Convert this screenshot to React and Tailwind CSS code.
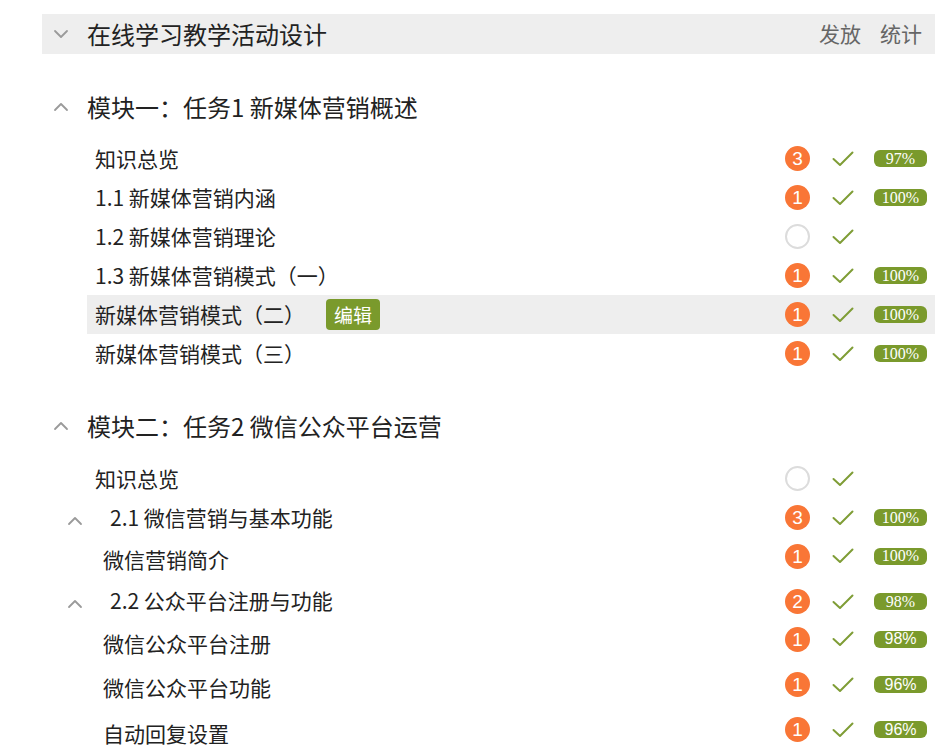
import React from "react";

const FONT = { fontFamily: '"Noto Sans CJK SC", "Noto Sans", sans-serif' };

function ChevronDown() {
  return (
    <svg width="16" height="10" viewBox="0 0 16 10" fill="none">
      <path d="M2 2 L8 8 L14 2" stroke="#9a9a9a" strokeWidth="1.8" strokeLinecap="round" strokeLinejoin="round" />
    </svg>
  );
}
function ChevronUp() {
  return (
    <svg width="16" height="10" viewBox="0 0 16 10" fill="none">
      <path d="M2 8 L8 2 L14 8" stroke="#9a9a9a" strokeWidth="1.8" strokeLinecap="round" strokeLinejoin="round" />
    </svg>
  );
}
function Check() {
  return (
    <svg width="22" height="16" viewBox="0 0 22 16" fill="none">
      <path d="M1.5 8 L8 14 L20.5 1.5" stroke="#7f9d36" strokeWidth="2" strokeLinecap="round" strokeLinejoin="round" />
    </svg>
  );
}

function Status({ count, pct, serif = true, offset = "" }) {
  return (
    <div className={`flex items-center shrink-0 ${offset}`}>
      {count ? (
        <div
          className="w-[25px] h-[25px] rounded-full bg-[#f97636] text-white flex items-center justify-center text-[19px] leading-none"
          style={{ fontFamily: '"Liberation Sans", Arial, sans-serif' }}
        >
          {count}
        </div>
      ) : (
        <div className="w-[25px] h-[25px] rounded-full border-2 border-[#dcdcdc] box-border" />
      )}
      <div className="ml-[22px] w-[22px] flex items-center justify-center">
        <Check />
      </div>
      <div className="ml-[20px] w-[53px] flex items-center">
        {pct && (
          <div
            className="w-[53px] h-[17px] rounded-[6px] bg-[#7a9a2c] text-white flex items-center justify-center text-[16px] leading-none"
            style={{ fontFamily: serif ? '"Liberation Serif", serif' : '"Liberation Sans", sans-serif' }}
          >
            {pct}
          </div>
        )}
      </div>
    </div>
  );
}

function Row({ text, count, pct, serif, h = "h-[39px]", textCls = "pl-[8px]", highlight, edit, textOffset = "", badgeOffset = "", chevron }) {
  return (
    <div className={`flex items-center justify-between pr-[8px] ${h} ${highlight ? "bg-[#eeeeee]" : ""}`}>
      <div className={`flex items-center ${textOffset}`}>
        {chevron}
        <span className={`text-[21px] text-[#222] whitespace-nowrap ${textCls}`}>{text}</span>
        {edit && (
          <span className="ml-[21px] h-[31px] px-[8px] rounded-[4px] bg-[#7a9a2c] text-white text-[19px] flex items-center leading-none">
            编辑
          </span>
        )}
      </div>
      <Status count={count} pct={pct} serif={serif} offset={badgeOffset} />
    </div>
  );
}

function ModuleHeader({ title, className = "" }) {
  return (
    <div className={`flex items-center h-[40px] ${className}`}>
      <div className="w-[45px] flex justify-center pr-[8px]">
        <ChevronUp />
      </div>
      <span className="text-[24px] text-[#222] whitespace-nowrap">{title}</span>
    </div>
  );
}

const subChevron = (
  <div className="-ml-[20px] mt-[6px] w-[16px] flex justify-center">
    <ChevronUp />
  </div>
);

export default function App() {
  return (
    <div className="w-[945px] h-[752px] bg-white overflow-hidden" style={FONT}>
      <div className="pt-[14px] pl-[42px] w-[935px]">
        <div className="h-[40px] bg-[#eeeeee] flex items-center justify-between pr-[13px]">
          <div className="flex items-center">
            <div className="w-[45px] flex justify-center pr-[8px]">
              <ChevronDown />
            </div>
            <span className="text-[24px] text-[#222]">在线学习教学活动设计</span>
          </div>
          <div className="flex items-center gap-[19px] text-[21px] text-[#666]">
            <span>发放</span>
            <span>统计</span>
          </div>
        </div>

        <ModuleHeader title="模块一：任务1 新媒体营销概述" className="mt-[33px]" />
        <div className="ml-[45px] mt-[12px]">
          <Row text="知识总览" count="3" pct="97%" />
          <Row text="1.1 新媒体营销内涵" count="1" pct="100%" />
          <Row text="1.2 新媒体营销理论" />
          <Row text="1.3 新媒体营销模式（一）" count="1" pct="100%" />
          <Row text="新媒体营销模式（二）" count="1" pct="100%" highlight edit />
          <Row text="新媒体营销模式（三）" count="1" pct="100%" />
        </div>

        <ModuleHeader title="模块二：任务2 微信公众平台运营" className="mt-[33px]" />
        <div className="ml-[45px] mt-[13px]">
          <Row text="知识总览" />
          <Row text="2.1 微信营销与基本功能" count="3" pct="100%" textCls="pl-[27px]" chevron={subChevron} />
          <Row
            text="微信营销简介"
            count="1"
            pct="100%"
            h="h-[42px]"
            textCls="pl-[16px]"
            textOffset="translate-y-[2px]"
            badgeOffset="-translate-y-[2px]"
          />
          <Row
            text="2.2 公众平台注册与功能"
            count="2"
            pct="98%"
            h="h-[41px]"
            textCls="pl-[27px]"
            textOffset="translate-y-[1px]"
            badgeOffset="translate-y-[2px]"
            chevron={subChevron}
          />
          <Row
            text="微信公众平台注册"
            count="1"
            pct="98%"
            serif={false}
            h="h-[42px]"
            textCls="pl-[16px]"
            textOffset="translate-y-[3px]"
            badgeOffset="-translate-y-[2px]"
          />
          <Row text="微信公众平台功能" count="1" pct="96%" serif={false} h="h-[45px]" textCls="pl-[16px]" textOffset="translate-y-[3px]" />
          <Row text="自动回复设置" count="1" pct="96%" serif={false} h="h-[45px]" textCls="pl-[16px]" textOffset="translate-y-[4px]" />
        </div>
      </div>
    </div>
  );
}
